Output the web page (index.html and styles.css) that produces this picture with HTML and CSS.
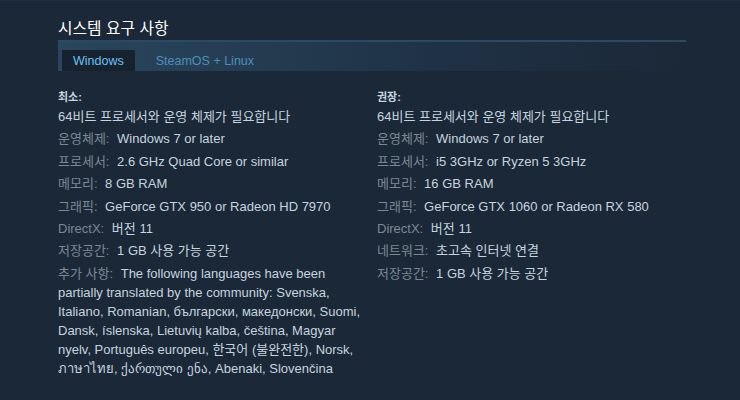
FILE: index.html
```html
<!DOCTYPE html>
<html lang="ko">
<head>
<meta charset="utf-8">
<link rel="stylesheet" href="styles.css">
</head>
<body>
<div class="page">
  <h2 class="title">시스템 요구 사항</h2>
  <div class="tabs">
    <div class="tab active">Windows</div>
    <div class="tab">SteamOS + Linux</div>
  </div>
  <div class="cols">
    <div class="col">
      <div class="head">최소:</div>
      <ul class="req">
        <li>64비트 프로세서와 운영 체제가 필요합니다</li>
        <li><span class="lbl">운영체제:</span> Windows 7 or later</li>
        <li><span class="lbl">프로세서:</span> 2.6 GHz Quad Core or similar</li>
        <li><span class="lbl">메모리:</span> 8 GB RAM</li>
        <li><span class="lbl">그래픽:</span> GeForce GTX 950 or Radeon HD 7970</li>
        <li><span class="lbl">DirectX:</span> 버전 11</li>
        <li><span class="lbl">저장공간:</span> 1 GB 사용 가능 공간</li>
        <li><span class="lbl">추가 사항:</span> The following languages have been partially translated by the community: Svenska, Italiano, Romanian, български, македонски, Suomi, Dansk, íslenska, Lietuvių kalba, čeština, Magyar nyelv, Português europeu, 한국어 (불완전한), Norsk, <span class="nb">ภาษาไทย,</span> ქართული ენა, Abenaki, Slovenčina</li>
      </ul>
    </div>
    <div class="col">
      <div class="head">권장:</div>
      <ul class="req">
        <li>64비트 프로세서와 운영 체제가 필요합니다</li>
        <li><span class="lbl">운영체제:</span> Windows 7 or later</li>
        <li><span class="lbl">프로세서:</span> i5 3GHz or Ryzen 5 3GHz</li>
        <li><span class="lbl">메모리:</span> 16 GB RAM</li>
        <li><span class="lbl">그래픽:</span> GeForce GTX 1060 or Radeon RX 580</li>
        <li><span class="lbl">DirectX:</span> 버전 11</li>
        <li><span class="lbl">네트워크:</span> 초고속 인터넷 연결</li>
        <li><span class="lbl">저장공간:</span> 1 GB 사용 가능 공간</li>
      </ul>
    </div>
  </div>
</div>
</body>
</html>
```
FILE: styles.css
```css
html, body {
  margin: 0;
  padding: 0;
  background: #1b2838;
  height: 100%;
}
body {
  font-family: "Liberation Sans", Arial, "Noto Sans CJK KR", sans-serif;
  color: #c6d4df;
  border-top: 1px solid #213245;
  box-sizing: border-box;
}
.page {
  width: 628px;
  padding: 0 0 0 58px;
}
.title {
  margin: 0;
  padding-top: 15px;
  height: 24px;
  font-size: 15.8px;
  font-weight: normal;
  color: #ffffff;
  border-bottom: 2px solid #2b4b64;
}
.tabs {
  display: flex;
  align-items: flex-end;
  height: 29px;
  background: linear-gradient(to right, rgba(42, 72, 96, 0.95) 0%, rgba(35, 58, 80, 0.55) 60%, rgba(27, 40, 56, 0.1) 100%);
  padding-left: 4px;
  gap: 10px;
}
.tab {
  height: 21px;
  line-height: 22px;
  padding: 0 11px;
  font-size: 12.5px;
  color: #4b90bc;
}
.tab.active {
  background: #17222f;
  color: #67c1f5;
}
.cols {
  display: grid;
  grid-template-columns: 308px 1fr;
  column-gap: 11px;
  padding-top: 19px;
}
.head {
  font-size: 11px;
  font-weight: bold;
  color: #c6d4df;
  line-height: 14px;
  margin-bottom: 3px;
}
.req {
  list-style: none;
  margin: 0;
  padding: 0;
  font-size: 13px;
  line-height: 19px;
  color: #c6d4df;
}
.req li {
  margin-bottom: 3.4px;
}
.lbl {
  color: #7c8893;
  margin-right: 4px;
}
.nb {
  white-space: nowrap;
}
```
